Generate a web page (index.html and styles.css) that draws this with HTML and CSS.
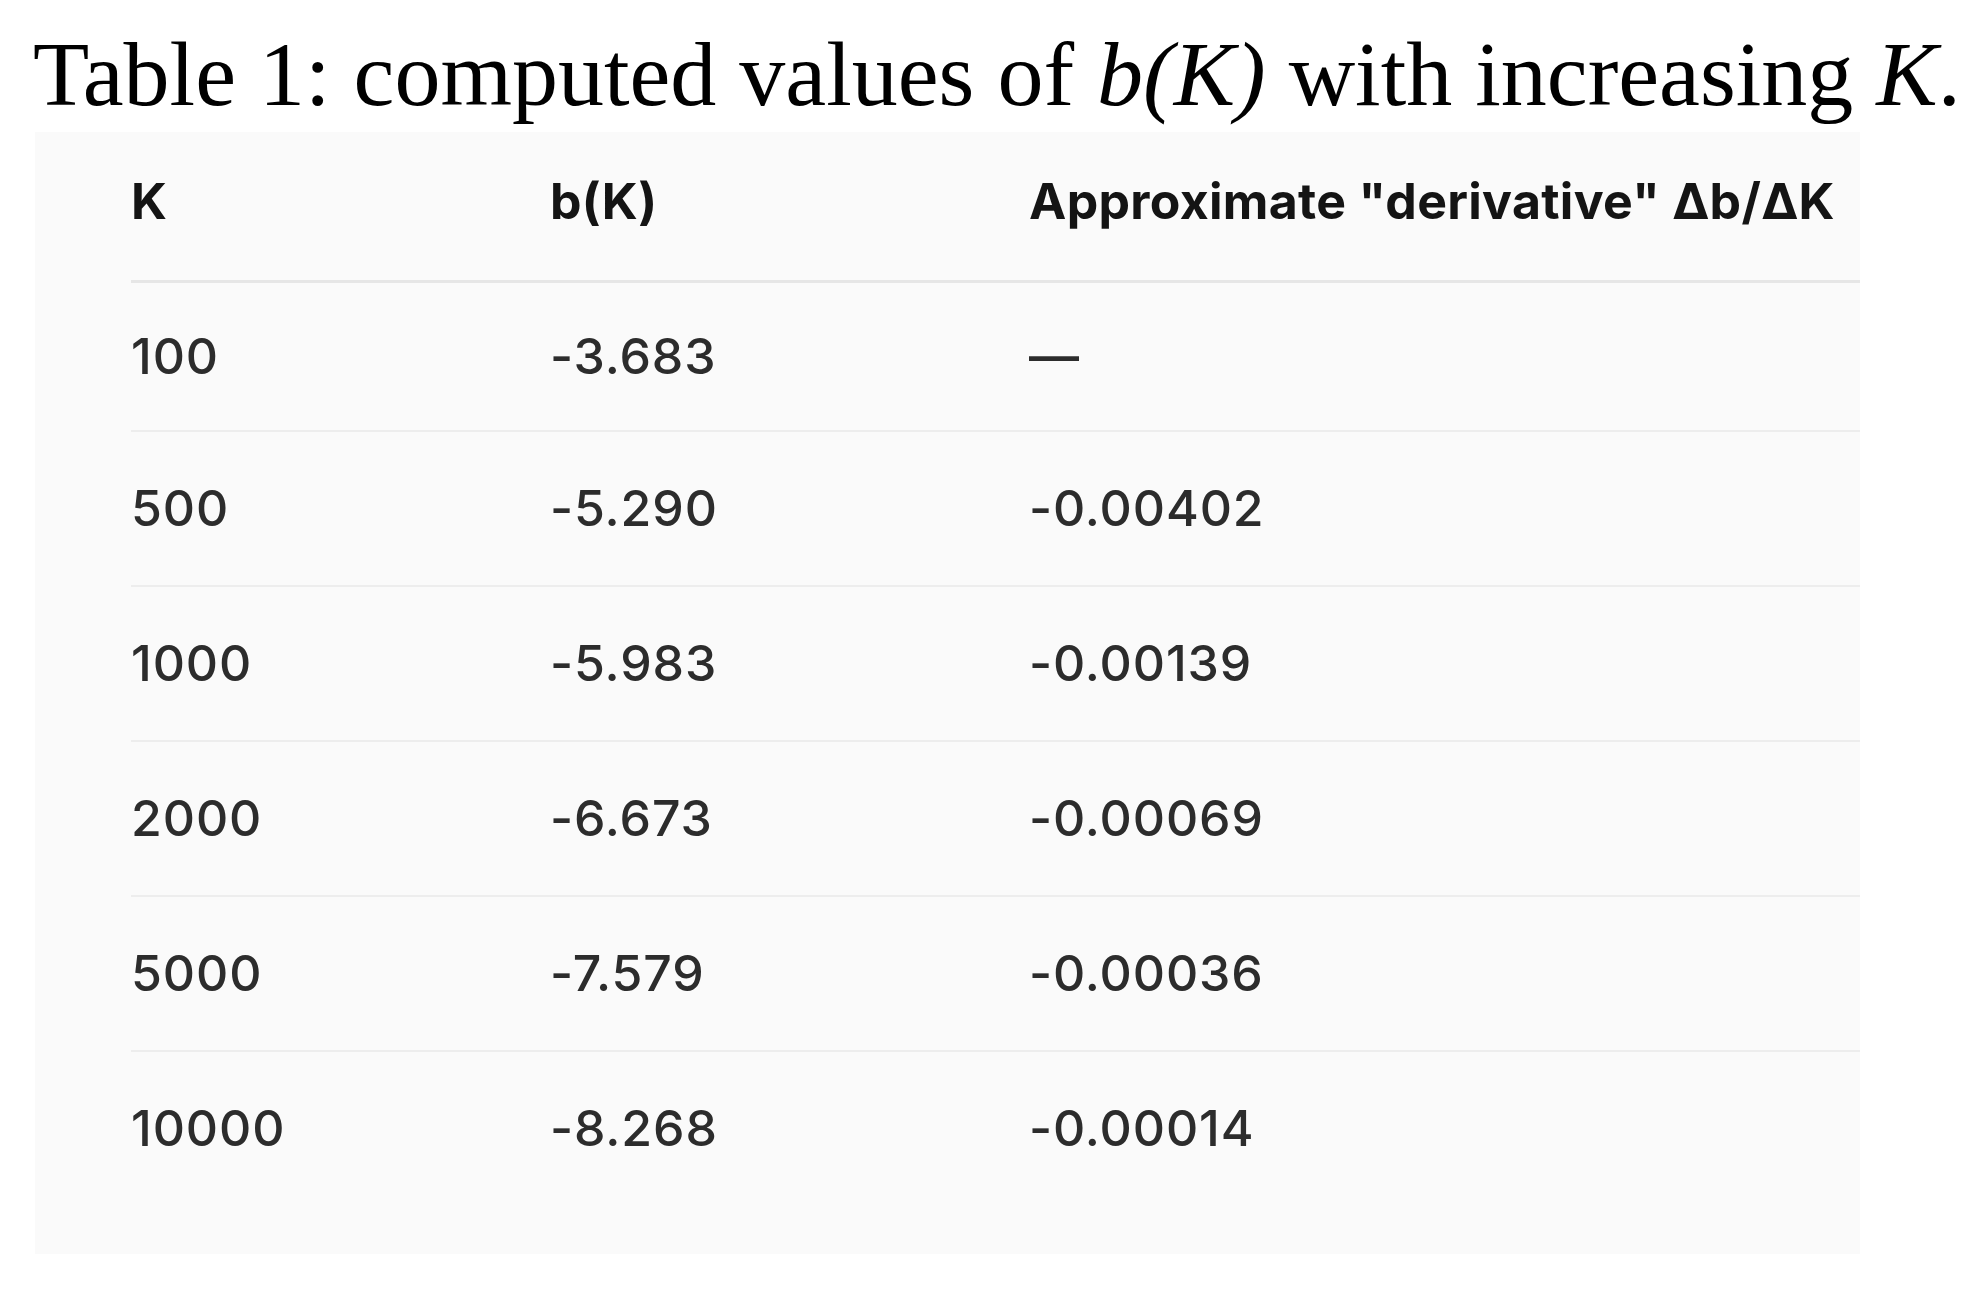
FILE: index.html
```html
<!DOCTYPE html>
<html lang="en">
<head>
<meta charset="utf-8">
<title>Table 1</title>
<link rel="stylesheet" href="styles.css">
</head>
<body>
<div class="page">
  <h1 class="caption">Table 1: computed values of <i>b(K)</i> with increasing <i>K</i>.</h1>
  <div class="panel">
    <table class="data">
      <thead>
        <tr><th class="c1">K</th><th class="c2">b(K)</th><th class="c3">Approximate "derivative" Δb/ΔK</th></tr>
      </thead>
      <tbody>
        <tr><td>100</td><td>-3.683</td><td>—</td></tr>
        <tr><td>500</td><td>-5.290</td><td>-0.00402</td></tr>
        <tr><td>1000</td><td>-5.983</td><td>-0.00139</td></tr>
        <tr><td>2000</td><td>-6.673</td><td>-0.00069</td></tr>
        <tr><td>5000</td><td>-7.579</td><td>-0.00036</td></tr>
        <tr><td>10000</td><td>-8.268</td><td>-0.00014</td></tr>
      </tbody>
    </table>
  </div>
</div>
</body>
</html>
```
FILE: styles.css
```css
html, body {
  margin: 0;
  padding: 0;
  background: #ffffff;
}
.page {
  width: 1986px;
  height: 1291px;
  overflow: hidden;
}
.caption {
  margin: 0;
  padding: 8px 0 0 33px;
  height: 124px;
  font-family: "Liberation Serif", "Times New Roman", serif;
  font-weight: normal;
  font-size: 92px;
  line-height: 132px;
  color: #000;
  white-space: nowrap;
}
.caption i {
  font-style: italic;
}
.panel {
  margin-left: 35px;
  width: 1825px;
  height: 1122px;
  background: #fafafa;
  padding-left: 96px;
  box-sizing: border-box;
}
.data {
  width: 100%;
  border-collapse: collapse;
  font-family: Inter, "Noto Sans", sans-serif;
  font-size: 50px;
  font-weight: 500;
  letter-spacing: 0.9px;
  color: #2c2c2c;
}
.data th {
  text-align: left;
  font-weight: 700;
  letter-spacing: 0.3px;
  color: #141414;
  height: 149px;
  padding: 0 0 10px 0;
  box-sizing: border-box;
  vertical-align: middle;
  border-bottom: 3px solid #e6e6e6;
}
.data td {
  height: 153px;
  padding: 0;
  vertical-align: middle;
  border-bottom: 2px solid #ededed;
}
.data tbody tr:first-child td {
  height: 147px;
}
.data tbody tr:last-child td {
  border-bottom: none;
}
.c1 { width: 419px; }
.c2 { width: 479px; }
```
